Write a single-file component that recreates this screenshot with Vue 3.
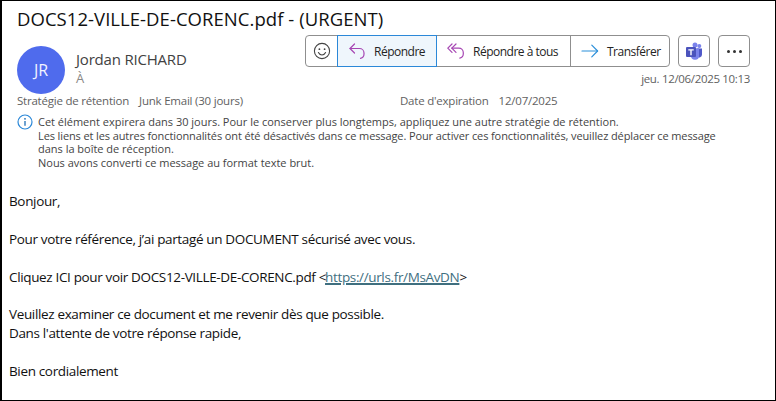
<script setup>
const lines = [
  "Cet élément expirera dans 30 jours. Pour le conserver plus longtemps, appliquez une autre stratégie de rétention.",
  "Les liens et les autres fonctionnalités ont été désactivés dans ce message. Pour activer ces fonctionnalités, veuillez déplacer ce message",
  "dans la boîte de réception.",
  "Nous avons converti ce message au format texte brut."
]
</script>

<template>
  <div class="frame">
    <h1 class="subject">DOCS12-VILLE-DE-CORENC.pdf - (URGENT)</h1>
    <div class="head">
      <div class="avatar">JR</div>
      <div class="who">
        <div class="name">Jordan RICHARD</div>
        <div class="to">À</div>
      </div>
      <div class="right">
        <div class="tools">
          <div class="group">
            <button class="btn emoji" aria-label="Réaction">
              <svg width="18" height="18" viewBox="0 0 18 18" fill="none" stroke="#444" stroke-width="1.1"><circle cx="9" cy="9" r="7.6"/><circle cx="6.4" cy="7.2" r=".9" fill="#444" stroke="none"/><circle cx="11.6" cy="7.2" r=".9" fill="#444" stroke="none"/><path d="M5.4 10.6c.8 1.6 2.1 2.4 3.6 2.4s2.8-.8 3.6-2.4" stroke-linecap="round"/></svg>
            </button>
            <button class="btn reply">
              <svg width="18" height="18" viewBox="0 0 18 18" fill="none" stroke="#a646b3" stroke-width="1.2" stroke-linecap="round" stroke-linejoin="round"><path d="M6.5 2 2 6.5 6.5 11"/><path d="M2 6.5h9.5a4.5 4.5 0 0 1 4.5 4.5v1a4.5 4.5 0 0 1-3.5 4.4"/></svg>
              <span>Répondre</span>
            </button>
            <button class="btn all">
              <svg width="18" height="18" viewBox="0 0 18 18" fill="none" stroke="#a646b3" stroke-width="1.2" stroke-linecap="round" stroke-linejoin="round"><path d="M5 2 .8 6.2 5 10.4"/><path d="M9 2 4.8 6.2 9 10.4"/><path d="M4.8 6.2h7a4.5 4.5 0 0 1 4.5 4.5v1a4.5 4.5 0 0 1-3.5 4.4"/></svg>
              <span>Répondre à tous</span>
            </button>
            <button class="btn fwd">
              <svg width="18" height="14" viewBox="0 0 18 14" fill="none" stroke="#2b8fd9" stroke-width="1.2" stroke-linecap="round" stroke-linejoin="round"><path d="M1 7h15.5"/><path d="M10.8 1.2 16.6 7l-5.8 5.8"/></svg>
              <span>Transférer</span>
            </button>
          </div>
          <button class="square" aria-label="Teams">
            <svg width="18" height="18" viewBox="0 0 18 18"><circle cx="14.3" cy="4" r="2" fill="#7b83eb"/><circle cx="10" cy="2.9" r="2.5" fill="#7b83eb"/><path d="M12 6.6h5v6a2.8 2.8 0 0 1-5 1.8z" fill="#5059c9"/><path d="M6 6.2h8v7.3a4 4 0 0 1-8 .6z" fill="#7b83eb"/><rect x="1" y="5" width="10" height="10" rx="1" fill="#4b53bc"/><path d="M3.3 7.3h5.4v1.2H6.7v4.8H5.3V8.5h-2z" fill="#fff"/></svg>
          </button>
          <button class="square" aria-label="Plus">
            <span class="dots"><i></i><i></i><i></i></span>
          </button>
        </div>
        <div class="date">jeu. 12/06/2025 10:13</div>
      </div>
    </div>
    <div class="retention">
      <div class="pair first"><span>Stratégie de rétention</span><span>Junk Email (30 jours)</span></div>
      <div class="pair"><span>Date d'expiration</span><span>12/07/2025</span></div>
    </div>
    <div class="info">
      <svg class="info-icon" width="16" height="16" viewBox="0 0 16 16" fill="none"><circle cx="8" cy="8" r="7" stroke="#2b88d8" stroke-width="1.2"/><circle cx="8" cy="4.8" r=".9" fill="#1f6fb5"/><path d="M8 7v4.8" stroke="#1f6fb5" stroke-width="1.3"/></svg>
      <div class="info-text">
        <div v-for="l in lines" :key="l">{{ l }}</div>
      </div>
    </div>
    <div class="body">
      <p>Bonjour,</p>
      <p>Pour votre référence, j’ai partagé un DOCUMENT sécurisé avec vous.</p>
      <p>Cliquez ICI pour voir DOCS12-VILLE-DE-CORENC.pdf &lt;<a href="#">https://urls.fr/MsAvDN</a>&gt;</p>
      <p>Veuillez examiner ce document et me revenir dès que possible.<br>Dans l'attente de votre réponse rapide,</p>
      <p>Bien cordialement</p>
    </div>
  </div>
</template>

<style>
html, body { margin: 0; background: #fff; }
</style>

<style scoped>
.frame {
  box-sizing: border-box;
  width: 776px;
  height: 401px;
  overflow: hidden;
  background: #fff;
  border: solid #000;
  border-width: 1px 1px 1px 2px;
  font-family: "Open Sans", "Noto Sans", sans-serif;
  color: #252423;
  position: relative;
}
.subject {
  margin: 0;
  padding: 5px 0 0 15px;
  font-size: 18.5px;
  line-height: 25px;
  font-weight: 400;
  color: #111;
  letter-spacing: .05px;
}
.head {
  display: flex;
  height: 49px;
  padding: 15px 0 0 15px;
}
.avatar {
  width: 48px;
  height: 48px;
  flex: none;
  border-radius: 50%;
  background: #4f6bed;
  color: #f2f4ff;
  display: flex;
  align-items: center;
  justify-content: center;
  font-size: 16px;
}
.who { margin-left: 11px; padding-top: 3px; }
.name { font-size: 15px; line-height: 20px; color: #424242; letter-spacing: -.2px; }
.to { font-size: 13px; line-height: 19px; color: #8a8886; }
.right {
  margin-left: auto;
  margin-right: 25px;
  margin-top: -11px;
  display: flex;
  flex-direction: column;
  align-items: flex-end;
}
.tools { display: flex; gap: 8px; }
.group {
  display: flex;
  height: 32px;
  box-sizing: border-box;
  border: 1px solid #8f8f8f;
  border-radius: 4px;
  background: #fff;
}
button {
  font: inherit;
  background: none;
  border: 0;
  padding: 0;
  color: #242424;
  display: flex;
  align-items: center;
  cursor: default;
}
.btn { font-size: 12px; letter-spacing: -.5px; white-space: nowrap; }
.emoji { width: 31px; justify-content: center; }
.reply {
  width: 100px;
  height: 32px;
  margin: -1px 0;
  box-sizing: border-box;
  border: 1px solid #2b88d8;
  background: #eff6fc;
  padding-left: 10px;
  gap: 8px;
}
.all { width: 134px; padding-left: 10px; gap: 8px; box-sizing: border-box; border-right: 1px solid #8f8f8f; }
.fwd { width: 98px; padding-left: 10px; gap: 8px; box-sizing: border-box; }
.square {
  width: 32px;
  height: 32px;
  box-sizing: border-box;
  border: 1px solid #8f8f8f;
  border-radius: 4px;
  justify-content: center;
}
.dots { display: flex; gap: 3px; }
.dots i { width: 3px; height: 3px; border-radius: 50%; background: #333; }
.date { font-size: 11.5px; line-height: 17px; color: #616161; margin-top: 3px; letter-spacing: -.33px; }
.retention {
  display: flex;
  padding-left: 15px;
  margin-top: -3px;
  height: 17px;
  font-size: 11.5px;
  line-height: 17px;
  color: #616161;
  letter-spacing: -.22px;
}
.pair { display: flex; gap: 10px; }
.pair.first { width: 383px; }
.info { display: flex; margin: 6px 0 0 15px; height: 50px; }
.info-icon { flex: none; margin-top: -1px; margin-right: 5px; }
.info-text { font-size: 11px; line-height: 13.6px; color: #444; letter-spacing: -.01px; white-space: nowrap; }
.info-text div:nth-child(2) { letter-spacing: -.11px; }
.body { padding: 27px 0 0 7px; font-size: 13.5px; line-height: 19px; color: #111; letter-spacing: -.35px; }
.body p { margin: 0 0 18.8px; }
.body a { color: #3f6f7f; text-decoration: underline; text-decoration-thickness: 1.5px; margin-left: -1px; }
</style>
